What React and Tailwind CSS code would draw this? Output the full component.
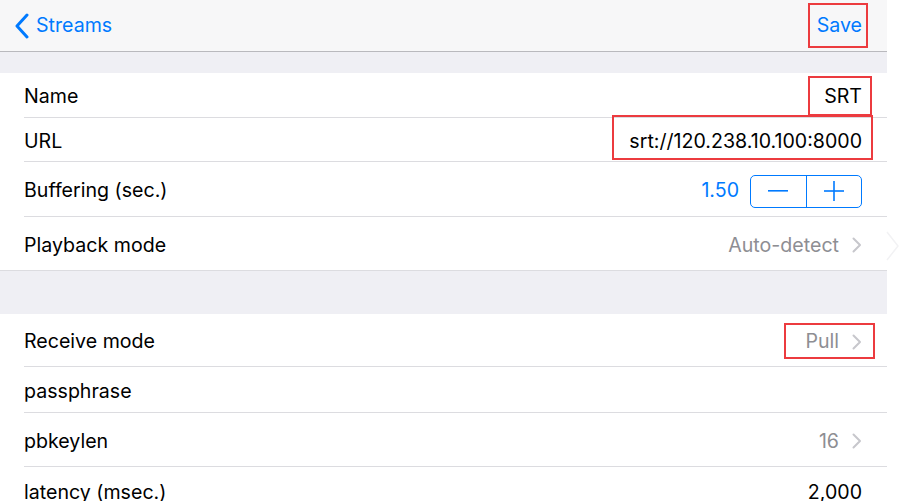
import React from 'react'

const font = { fontFamily: 'Inter, "Liberation Sans", sans-serif' }

function Chevron({ className = '' }) {
  return (
    <svg width="10" height="16" viewBox="0 0 10 16" className={className}>
      <path d="M1.5 1.5 L8 8 L1.5 14.5" fill="none" stroke="currentColor" strokeWidth="2" strokeLinecap="round" strokeLinejoin="round" />
    </svg>
  )
}

function Mark({ className }) {
  return <span className={`pointer-events-none absolute border-2 border-[#ec3b3f] ${className}`} />
}

function Row({ label, h, children, sep = true }) {
  return (
    <div className={`flex shrink-0 items-center bg-white pl-[24px] ${h}`}>
      <div className={`flex h-full flex-1 items-center justify-between pr-[25px] pt-[4px] ${sep ? 'border-b border-[#dcdce0]' : ''}`}>
        <span className="text-[19.6px] text-black">{label}</span>
        {children}
      </div>
    </div>
  )
}

export default function App() {
  return (
    <div className="flex h-[501px] w-[899px] overflow-hidden bg-white" style={font}>
      <div className="flex w-[887px] flex-col">
        {/* nav bar */}
        <div className="flex h-[52px] shrink-0 items-center justify-between border-b border-[#b9b9bd] bg-[#f7f7f8] pl-[14px] pr-[25px] pt-[1px]">
          <div className="flex items-center gap-[6px] text-[#007aff]">
            <svg width="16" height="26" viewBox="0 0 16 26">
              <path d="M13 2 L3 13 L13 24" fill="none" stroke="currentColor" strokeWidth="3" strokeLinecap="round" strokeLinejoin="round" />
            </svg>
            <span className="text-[19.6px]">Streams</span>
          </div>
          <span className="relative text-[19.6px] text-[#007aff]">
            Save
            <Mark className="-left-[9px] -right-[6px] -top-[8px] -bottom-[7px]" />
          </span>
        </div>

        <div className="h-[21px] shrink-0 bg-[#efeff4]" />

        <Row label="Name" h="h-[45px]">
          <span className="relative text-[19.6px] text-black">
            SRT
            <Mark className="-left-[16px] -right-[10px] -top-[6px] -bottom-[4px]" />
          </span>
        </Row>
        <Row label="URL" h="h-[44px]">
          <span className="relative text-[19.6px] text-black">
            srt://120.238.10.100:8000
            <Mark className="-left-[17px] -right-[11px] -top-[12px] -bottom-[4px]" />
          </span>
        </Row>
        <Row label="Buffering (sec.)" h="h-[55px]">
          <div className="flex items-center gap-[11px]">
            <span className="text-[19.6px] text-[#007aff]">1.50</span>
            <div className="flex h-[33px] w-[112px] overflow-hidden rounded-[5px] border border-[#007aff] text-[#007aff]">
              <div className="flex flex-1 items-center justify-center border-r border-[#007aff]">
                <svg width="20" height="2" viewBox="0 0 20 2"><rect width="20" height="1.6" fill="currentColor" /></svg>
              </div>
              <div className="flex flex-1 items-center justify-center">
                <svg width="20" height="20" viewBox="0 0 20 20">
                  <rect x="0" y="9.2" width="20" height="1.6" fill="currentColor" />
                  <rect x="9.2" y="0" width="1.6" height="20" fill="currentColor" />
                </svg>
              </div>
            </div>
          </div>
        </Row>
        <div className="flex h-[54px] shrink-0 items-center border-b border-[#dcdce0] bg-white pl-[24px] pr-[25px] pt-[4px]">
          <span className="flex-1 text-[19.6px] text-black">Playback mode</span>
          <span className="flex items-center gap-[13px] text-[19.6px] text-[#8e8e93]">
            Auto-detect
            <Chevron className="text-[#c7c7cc]" />
          </span>
        </div>

        <div className="h-[43px] shrink-0 bg-[#efeff4]" />

        <Row label="Receive mode" h="h-[53px]">
          <span className="relative flex items-center gap-[13px] text-[19.6px] text-[#8e8e93]">
            Pull
            <Chevron className="text-[#c7c7cc]" />
            <Mark className="-left-[21px] -right-[13px] -top-[4px] -bottom-[2px]" />
          </span>
        </Row>
        <Row label="passphrase" h="h-[46px]" />
        <Row label="pbkeylen" h="h-[54px]">
          <span className="flex items-center gap-[13px] text-[19.6px] text-[#8e8e93]">
            16
            <Chevron className="text-[#c7c7cc]" />
          </span>
        </Row>
        <Row label="latency (msec.)" h="h-[48px]" sep={false}>
          <span className="text-[19.6px] text-black">2,000</span>
        </Row>
      </div>
      <div className="flex w-[12px] flex-col pt-[231px]">
        <svg width="14" height="30" viewBox="0 0 14 30" className="-ml-[1px] text-[#f2f2f4]">
          <path d="M1 1 L12 15 L1 29" fill="none" stroke="currentColor" strokeWidth="1.5" />
        </svg>
      </div>
    </div>
  )
}
